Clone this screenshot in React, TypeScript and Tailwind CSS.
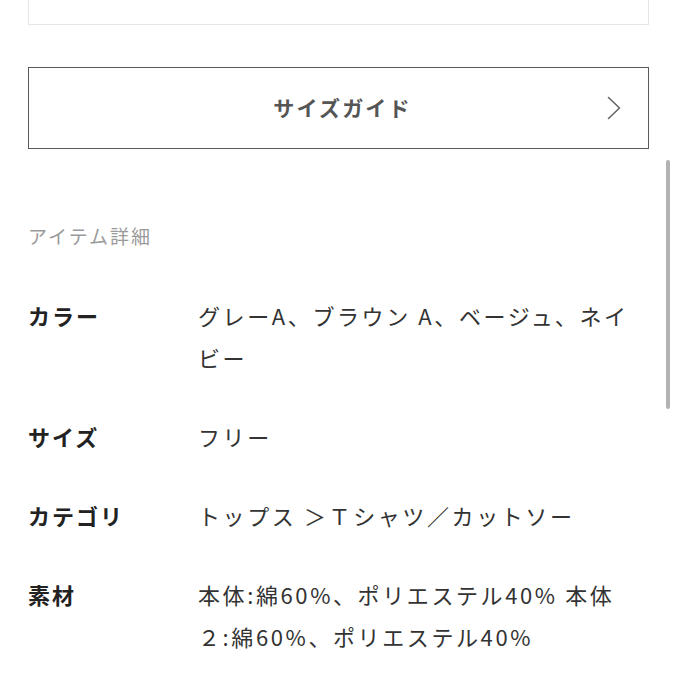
const font = {
  fontFamily: '"Noto Sans CJK JP", "Noto Sans", sans-serif',
};

type Row = {
  label: string;
  lines: string[];
};

const rows: Row[] = [
  { label: "カラー", lines: ["グレーA、ブラウン A、ベージュ、ネイ", "ビー"] },
  { label: "サイズ", lines: ["フリー"] },
  { label: "カテゴリ", lines: ["トップス ＞Ｔシャツ／カットソー"] },
  {
    label: "素材",
    lines: ["本体:綿60%、ポリエステル40% 本体", "２:綿60%、ポリエステル40%"],
  },
];

function Chevron() {
  return (
    <svg width="14" height="24" viewBox="0 0 14 24" fill="none">
      <polyline
        points="1.5,1.5 12.5,12 1.5,22.5"
        stroke="#666"
        strokeWidth="1.6"
        strokeLinecap="round"
        strokeLinejoin="round"
      />
    </svg>
  );
}

export default function App() {
  return (
    <div className="relative w-[677px] h-[677px] overflow-hidden bg-white" style={font}>
      <div className="px-[28px]">
        <div className="h-[25px] w-[621px] border-x border-b border-[#e6e6e6]" />

        <button className="mt-[42px] flex h-[82px] w-[621px] items-center border-[1.5px] border-[#5a5a5a] px-[27px]">
          <span className="flex-1 pl-[22px] text-center text-[21px] font-bold tracking-[2.2px] text-[#555]">
            サイズガイド
          </span>
          <Chevron />
        </button>

        <h2 className="mt-[73px] text-[19px] leading-[28px] tracking-[2px] text-[#9a9a9a]">
          アイテム詳細
        </h2>

        <dl className="mt-[44px] flex flex-col gap-[37px]">
          {rows.map((row) => (
            <div key={row.label} className="flex">
              <dt className="w-[170px] shrink-0 text-[22px] font-bold leading-[42px] tracking-[2px] text-[#222]">
                {row.label}
              </dt>
              <dd className="flex-1 text-[22px] leading-[42px] tracking-[2.6px] text-[#333]">
                {row.lines.map((line) => (
                  <div key={line} className="whitespace-nowrap">
                    {line}
                  </div>
                ))}
              </dd>
            </div>
          ))}
        </dl>
      </div>

      {/* scrollbar thumb */}
      <div className="absolute left-[666px] top-[160px] h-[249px] w-[4px] rounded-full bg-[#b3b3b3]" />
    </div>
  );
}
